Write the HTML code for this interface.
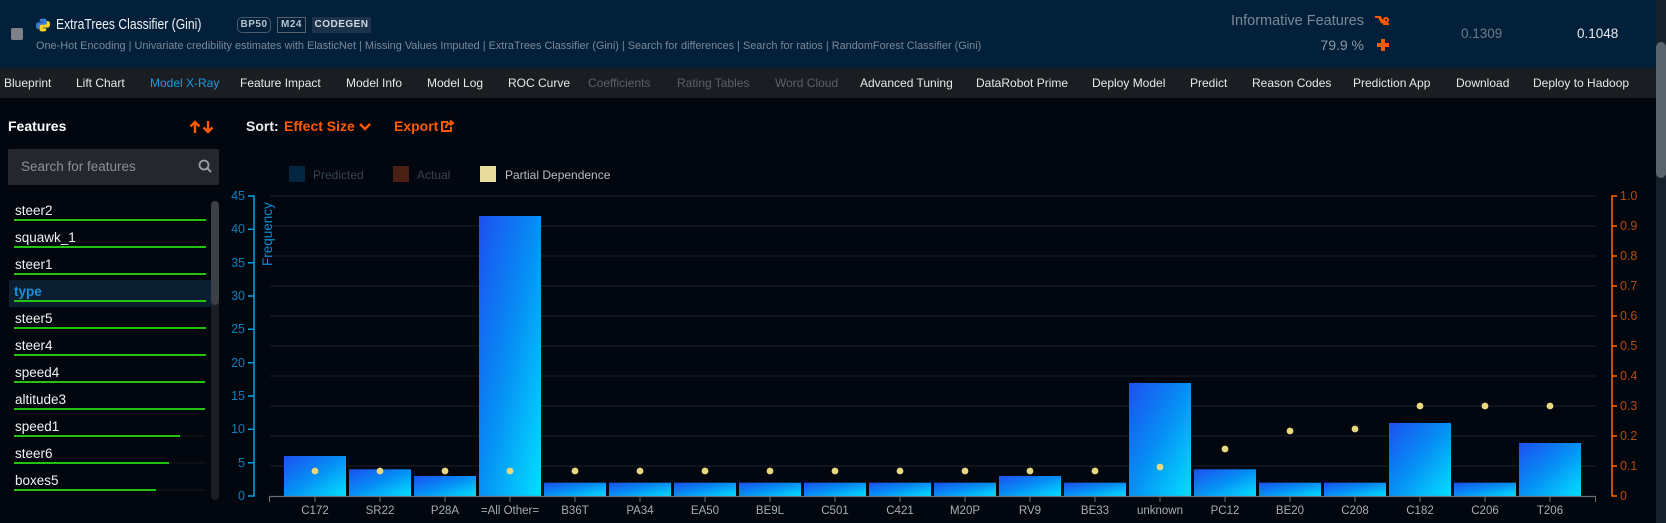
<!DOCTYPE html>
<html><head><meta charset="utf-8"><style>
*{margin:0;padding:0;box-sizing:border-box}
body{width:1666px;height:523px;background:#02060f;font-family:"Liberation Sans",sans-serif;position:relative;overflow:hidden;color:#fff}
.a{position:absolute;white-space:nowrap}
#hdr{position:absolute;left:0;top:0;width:1656px;height:68px;background:#02203a}
#nav{position:absolute;left:0;top:68px;width:1656px;height:30px;background:#1a1d22}
#nav span{position:absolute;top:8px;font-size:12px;color:#e6e8ea}
.badge{position:absolute;top:17px;height:16px;font-size:10px;font-weight:bold;line-height:14px;text-align:center;color:#b8c4d0;letter-spacing:.5px}
.it{position:absolute;left:15px;font-size:13.5px;color:#f2f2f2}
.ln{position:absolute;left:14px;width:192px;height:2px;background:#0d0f12}
.ln i{display:block;height:2px;background:#22c40f}
</style></head><body>
<div id="hdr"></div>
<div class="a" style="left:11px;top:28px;width:12px;height:12px;background:#7e8288;border-radius:2px"></div>
<svg class="a" style="left:36px;top:18px" width="14" height="14" viewBox="0 0 14 14"><path d="M7 0.5C3.5 0.5 3.7 2 3.7 2v1.8H7.1v.6H2.3S0 4.1 0 7.6s2 3.4 2 3.4H3.3V9.3s-.1-2 2-2h3.3s1.9 0 1.9-1.9V2.3S10.8.5 7 .5z" fill="#3a7bd5"/><path d="M7 13.5c3.5 0 3.3-1.5 3.3-1.5v-1.8H6.9v-.6h4.8S14 9.9 14 6.4s-2-3.4-2-3.4H10.7v1.7s.1 2-2 2H5.4s-1.9 0-1.9 1.9v3.1S3.2 13.5 7 13.5z" fill="#f7d32b"/></svg>
<div class="a" style="left:56px;top:16px;font-size:15px;color:#eef1f4;transform:scaleX(0.81);transform-origin:0 0">ExtraTrees Classifier (Gini)</div>
<div class="badge" style="left:237px;width:34px;border:1px solid #4b5a6b;border-radius:5px">BP50</div>
<div class="badge" style="left:277px;width:29px;border:1px solid #5a6572;">M24</div>
<div class="badge" style="left:312px;width:59px;background:#1c324b;line-height:16px;color:#d0d8e0">CODEGEN</div>
<div class="a" style="left:36px;top:40px;font-size:10.9px;color:#7a8897">One-Hot Encoding | Univariate credibility estimates with ElasticNet | Missing Values Imputed | ExtraTrees Classifier (Gini) | Search for differences | Search for ratios | RandomForest Classifier (Gini)</div>
<div class="a" style="right:302px;top:13px;font-size:14.5px;color:#7c8896">Informative Features</div>
<svg class="a" style="left:1374px;top:15px" width="16" height="12" viewBox="0 0 16 12"><path d="M1 2h5l4 7h5M5 2l3 6M12 3a2 2 0 1 0 0.1 0" stroke="#ff5a00" stroke-width="2" fill="none"/></svg>
<div class="a" style="right:302px;top:37px;font-size:14px;color:#8d98a4">79.9 %</div>
<div class="a" style="left:1377px;top:43px;width:12px;height:3.5px;background:#ff5a00"></div>
<div class="a" style="left:1381px;top:39px;width:3.5px;height:12px;background:#ff5a00"></div>
<div class="a" style="left:1461px;top:26px;font-size:13.5px;color:#6e7b88">0.1309</div>
<div class="a" style="left:1577px;top:26px;font-size:13.5px;color:#e6eaee">0.1048</div>
<div id="nav">
<span style="left:4px">Blueprint</span><span style="left:76px">Lift Chart</span><span style="left:150px;color:#1e9be0">Model X-Ray</span><span style="left:240px">Feature Impact</span><span style="left:346px">Model Info</span><span style="left:427px">Model Log</span><span style="left:508px">ROC Curve</span><span style="left:588px;color:#5c6168">Coefficients</span><span style="left:677px;color:#5c6168">Rating Tables</span><span style="left:775px;color:#5c6168">Word Cloud</span><span style="left:860px">Advanced Tuning</span><span style="left:976px">DataRobot Prime</span><span style="left:1092px">Deploy Model</span><span style="left:1190px">Predict</span><span style="left:1252px">Reason Codes</span><span style="left:1353px">Prediction App</span><span style="left:1456px">Download</span><span style="left:1533px">Deploy to Hadoop</span>
</div>
<div class="a" style="left:1656px;top:0;width:10px;height:523px;background:#15202b"></div>
<div class="a" style="left:1656px;top:42px;width:10px;height:136px;background:#5b636c;border-radius:5px"></div>

<div class="a" style="left:8px;top:118px;font-size:14px;font-weight:bold">Features</div>
<svg class="a" style="left:189px;top:120px" width="26" height="14" viewBox="0 0 26 14"><path d="M6 13V2M1.5 6.5L6 2l4.5 4.5M19 1v11M14.5 7.5L19 12l4.5-4.5" stroke="#ff5a00" stroke-width="2.4" fill="none"/></svg>
<div class="a" style="left:246px;top:118px;font-size:14px;font-weight:bold;color:#eee">Sort:</div>
<div class="a" style="left:284px;top:118px;font-size:14px;font-weight:bold;color:#ff5a00">Effect Size</div>
<svg class="a" style="left:359px;top:123px" width="12" height="8"><path d="M1 1l5 5 5-5" stroke="#ff5a00" stroke-width="2.4" fill="none"/></svg>
<div class="a" style="left:394px;top:118px;font-size:14px;font-weight:bold;color:#ff5a00">Export</div>
<svg class="a" style="left:440px;top:119px" width="14" height="13"><path d="M8 3H2v9h9V8" stroke="#ff5a00" stroke-width="2" fill="none"/><path d="M6 9c0-4 3-5 6-5M10 1.5l3 2.5-3 2.5" stroke="#ff5a00" stroke-width="2" fill="none"/></svg>
<div class="a" style="left:8px;top:149px;width:211px;height:36px;background:#24272d;border-radius:2px"></div>
<div class="a" style="left:21px;top:159px;font-size:13.5px;color:#8b9097">Search for features</div>
<svg class="a" style="left:198px;top:159px" width="14" height="14"><circle cx="6" cy="6" r="4.5" stroke="#9aa0a6" stroke-width="1.8" fill="none"/><path d="M9.5 9.5L13 13" stroke="#9aa0a6" stroke-width="2"/></svg>

<div class="a" style="left:9px;top:280px;width:202px;height:27px;background:#0c1f30"></div>
<div class="a" style="left:211px;top:201px;width:8px;height:299px;background:#1b1e24;border-radius:4px"></div>
<div class="a" style="left:211px;top:201px;width:8px;height:104px;background:#3b3f46;border-radius:4px"></div>
<div class="it" style="top:203px">steer2</div><div class="ln" style="top:219px"><i style="width:192px"></i></div>
<div class="it" style="top:230px">squawk_1</div><div class="ln" style="top:246px"><i style="width:192px"></i></div>
<div class="it" style="top:257px">steer1</div><div class="ln" style="top:273px"><i style="width:192px"></i></div>
<div class="it" style="top:284px;left:14px;font-weight:bold;color:#1c8fd8">type</div><div class="ln" style="top:300px"><i style="width:192px"></i></div>
<div class="it" style="top:311px">steer5</div><div class="ln" style="top:327px"><i style="width:192px"></i></div>
<div class="it" style="top:338px">steer4</div><div class="ln" style="top:354px"><i style="width:192px"></i></div>
<div class="it" style="top:365px">speed4</div><div class="ln" style="top:381px"><i style="width:191px"></i></div>
<div class="it" style="top:392px">altitude3</div><div class="ln" style="top:408px"><i style="width:191px"></i></div>
<div class="it" style="top:419px">speed1</div><div class="ln" style="top:435px"><i style="width:166px"></i></div>
<div class="it" style="top:446px">steer6</div><div class="ln" style="top:462px"><i style="width:155px"></i></div>
<div class="it" style="top:473px">boxes5</div><div class="ln" style="top:489px"><i style="width:142px"></i></div>

<svg class="a" style="left:0;top:0" width="1656" height="523">
<defs><linearGradient id="g" x1="0" y1="0" x2="1" y2="1"><stop offset="0" stop-color="#1c50f0"/><stop offset="0.5" stop-color="#0590f5"/><stop offset="1" stop-color="#04e0ff"/></linearGradient></defs>
<g font-family="Liberation Sans, sans-serif" font-size="12">
<rect x="289" y="166" width="16" height="16" fill="#022541"/><text x="313" y="179" fill="#3a4250">Predicted</text>
<rect x="393" y="166" width="16" height="16" fill="#4a2015"/><text x="417" y="179" fill="#3a4250">Actual</text>
<rect x="480" y="166" width="16" height="16" fill="#e8dc9c"/><text x="505" y="179" fill="#b8bcc2">Partial Dependence</text>
</g>
<g stroke="#1c2029" stroke-width="1">
<line x1="270" x2="1596" y1="196" y2="196"/><line x1="270" x2="1596" y1="226" y2="226"/><line x1="270" x2="1596" y1="256" y2="256"/><line x1="270" x2="1596" y1="286" y2="286"/><line x1="270" x2="1596" y1="316" y2="316"/><line x1="270" x2="1596" y1="346" y2="346"/><line x1="270" x2="1596" y1="376" y2="376"/><line x1="270" x2="1596" y1="406" y2="406"/><line x1="270" x2="1596" y1="436" y2="436"/><line x1="270" x2="1596" y1="466" y2="466"/>
</g>
<g fill="url(#g)">
<rect x="284" y="456" width="62" height="40"/><rect x="349" y="469.3" width="62" height="26.7"/><rect x="414" y="476" width="62" height="20"/><rect x="479" y="216" width="62" height="280"/><rect x="544" y="482.7" width="62" height="13.3"/><rect x="609" y="482.7" width="62" height="13.3"/><rect x="674" y="482.7" width="62" height="13.3"/><rect x="739" y="482.7" width="62" height="13.3"/><rect x="804" y="482.7" width="62" height="13.3"/><rect x="869" y="482.7" width="62" height="13.3"/><rect x="934" y="482.7" width="62" height="13.3"/><rect x="999" y="476" width="62" height="20"/><rect x="1064" y="482.7" width="62" height="13.3"/><rect x="1129" y="383" width="62" height="113"/><rect x="1194" y="469.3" width="62" height="26.7"/><rect x="1259" y="482.7" width="62" height="13.3"/><rect x="1324" y="482.7" width="62" height="13.3"/><rect x="1389" y="423" width="62" height="73"/><rect x="1454" y="482.7" width="62" height="13.3"/><rect x="1519" y="443" width="62" height="53"/>
</g>
<g fill="#e8d880">
<circle cx="315" cy="471" r="3.4"/><circle cx="380" cy="471" r="3.4"/><circle cx="445" cy="471" r="3.4"/><circle cx="510" cy="471" r="3.4"/><circle cx="575" cy="471" r="3.4"/><circle cx="640" cy="471" r="3.4"/><circle cx="705" cy="471" r="3.4"/><circle cx="770" cy="471" r="3.4"/><circle cx="835" cy="471" r="3.4"/><circle cx="900" cy="471" r="3.4"/><circle cx="965" cy="471" r="3.4"/><circle cx="1030" cy="471" r="3.4"/><circle cx="1095" cy="471" r="3.4"/><circle cx="1160" cy="467" r="3.4"/><circle cx="1225" cy="449" r="3.4"/><circle cx="1290" cy="431" r="3.4"/><circle cx="1355" cy="429" r="3.4"/><circle cx="1420" cy="406" r="3.4"/><circle cx="1485" cy="406" r="3.4"/><circle cx="1550" cy="406" r="3.4"/>
</g>
<line x1="269" x2="1596" y1="496.5" y2="496.5" stroke="#6a6e75" stroke-width="1.2"/>
<g stroke="#6a6e75"><line x1="269.5" x2="269.5" y1="496" y2="502"/><line x1="1595.5" x2="1595.5" y1="496" y2="502"/>
<path d="M315 496v6M380 496v6M445 496v6M510 496v6M575 496v6M640 496v6M705 496v6M770 496v6M835 496v6M900 496v6M965 496v6M1030 496v6M1095 496v6M1160 496v6M1225 496v6M1290 496v6M1355 496v6M1420 496v6M1485 496v6M1550 496v6"/></g>
<g font-family="Liberation Sans, sans-serif" font-size="11.5" fill="#a8adb3" text-anchor="middle">
<text x="315" y="514">C172</text><text x="380" y="514">SR22</text><text x="445" y="514">P28A</text><text x="510" y="514">=All Other=</text><text x="575" y="514">B36T</text><text x="640" y="514">PA34</text><text x="705" y="514">EA50</text><text x="770" y="514">BE9L</text><text x="835" y="514">C501</text><text x="900" y="514">C421</text><text x="965" y="514">M20P</text><text x="1030" y="514">RV9</text><text x="1095" y="514">BE33</text><text x="1160" y="514">unknown</text><text x="1225" y="514">PC12</text><text x="1290" y="514">BE20</text><text x="1355" y="514">C208</text><text x="1420" y="514">C182</text><text x="1485" y="514">C206</text><text x="1550" y="514">T206</text>
</g>
<path d="M248 196h6v300h-6M248 229.3h6M248 262.7h6M248 296h6M248 329.3h6M248 362.7h6M248 396h6M248 429.3h6M248 462.7h6" stroke="#0aa0e0" stroke-width="1.5" fill="none"/>
<g font-family="Liberation Sans, sans-serif" font-size="12.5" fill="#0a7fc0" text-anchor="end">
<text x="245" y="200">45</text><text x="245" y="233">40</text><text x="245" y="267">35</text><text x="245" y="300">30</text><text x="245" y="333">25</text><text x="245" y="367">20</text><text x="245" y="400">15</text><text x="245" y="433">10</text><text x="245" y="467">5</text><text x="245" y="500">0</text>
</g>
<text transform="translate(272,266) rotate(-90)" font-family="Liberation Sans, sans-serif" font-size="13.5" fill="#0a8ad0">Frequency</text>
<path d="M1617 196h-5v300h5M1612 226h5M1612 256h5M1612 286h5M1612 316h5M1612 346h5M1612 376h5M1612 406h5M1612 436h5M1612 466h5" stroke="#ff6a00" stroke-width="1.5" fill="none"/>
<g font-family="Liberation Sans, sans-serif" font-size="12.5" fill="#b84a08">
<text x="1620" y="200">1.0</text><text x="1620" y="230">0.9</text><text x="1620" y="260">0.8</text><text x="1620" y="290">0.7</text><text x="1620" y="320">0.6</text><text x="1620" y="350">0.5</text><text x="1620" y="380">0.4</text><text x="1620" y="410">0.3</text><text x="1620" y="440">0.2</text><text x="1620" y="470">0.1</text><text x="1620" y="500">0</text>
</g>
</svg>
</body></html>
